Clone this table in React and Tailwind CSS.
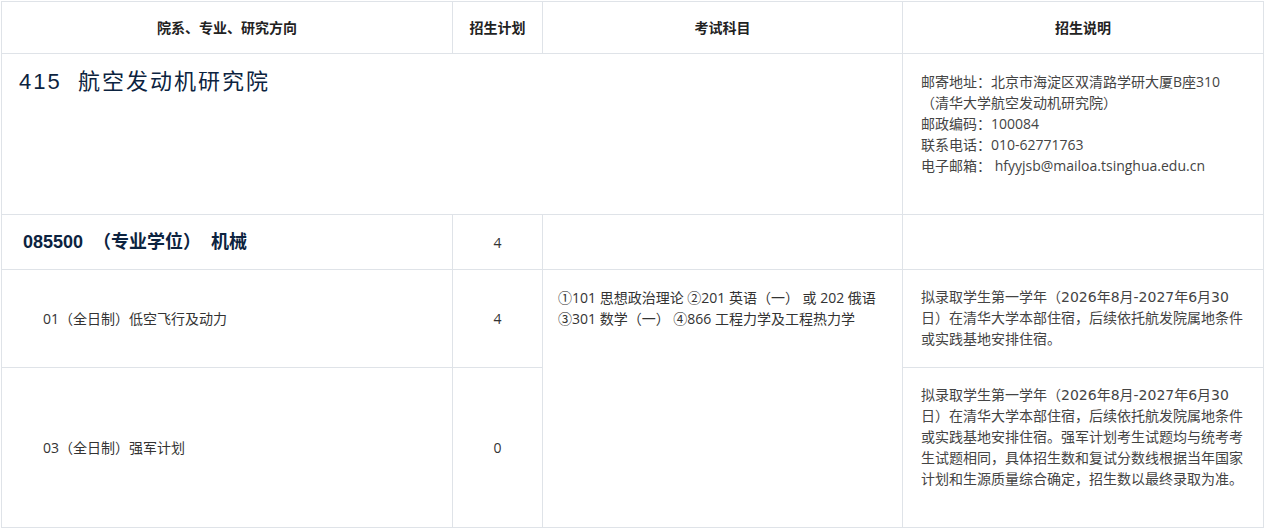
const font = "font-['Open_Sans','Noto_Sans_CJK_SC',sans-serif]";

const cell = 'border border-[#dfe3e8] align-middle';
const head = `${cell} text-center font-bold text-[14px] text-[#222]`;
const note = `${cell} align-top pl-[18px] pr-[18px] pt-[17px] text-[14px] leading-[21px] text-[#444] font-['DejaVu_Sans','Noto_Sans_CJK_SC',sans-serif]`;

const App = () => {
  return (
    <div className={`bg-white pl-px pt-px ${font} text-[14px] text-[#333]`}>
      <table className="border-collapse table-fixed w-[1262px]">
        <colgroup>
          <col className="w-[451px]" />
          <col className="w-[90px]" />
          <col className="w-[360px]" />
          <col className="w-[361px]" />
        </colgroup>
        <thead>
          <tr className="h-[52px]">
            <th className={head}>院系、专业、研究方向</th>
            <th className={head}>招生计划</th>
            <th className={head}>考试科目</th>
            <th className={head}>招生说明</th>
          </tr>
        </thead>
        <tbody>
          <tr className="h-[161px]">
            <td colSpan={3} className={`${cell} align-top pl-[17px] pt-[11px]`}>
              <span className="text-[22px] text-[#0c2340] tracking-[2px] font-['Liberation_Sans','Noto_Sans_CJK_SC',sans-serif]">
                415&nbsp; 航空发动机研究院
              </span>
            </td>
            <td className={`${cell} align-top pl-[18px] pt-[17px] leading-[21px] text-[#444]`}>
              <div>邮寄地址：北京市海淀区双清路学研大厦B座310</div>
              <div>（清华大学航空发动机研究院）</div>
              <div>邮政编码：100084</div>
              <div>联系电话：010-62771763</div>
              <div>电子邮箱： hfyyjsb@mailoa.tsinghua.edu.cn</div>
            </td>
          </tr>
          <tr className="h-[55px]">
            <td className={`${cell} pl-[21px]`}>
              <span className="text-[18px] font-bold text-[#0c2340] font-['Liberation_Sans','Noto_Sans_CJK_SC',sans-serif]">
                085500&nbsp; （专业学位）&nbsp; 机械
              </span>
            </td>
            <td className={`${cell} text-center`}>4</td>
            <td className={cell}></td>
            <td className={cell}></td>
          </tr>
          <tr className="h-[98px]">
            <td className={`${cell} pl-[41px]`}>01（全日制）低空飞行及动力</td>
            <td className={`${cell} text-center`}>4</td>
            <td rowSpan={2} className={`${cell} align-top pl-[15px] pt-[17px] leading-[21px]`}>
              <div>①101 思想政治理论 ②201 英语（一） 或 202 俄语</div>
              <div>③301 数学（一） ④866 工程力学及工程热力学</div>
            </td>
            <td className={note}>
              拟录取学生第一学年（2026年8月-2027年6月30日）在清华大学本部住宿，后续依托航发院属地条件或实践基地安排住宿。
            </td>
          </tr>
          <tr className="h-[160px]">
            <td className={`${cell} pl-[41px]`}>03（全日制）强军计划</td>
            <td className={`${cell} text-center`}>0</td>
            <td className={note}>
              拟录取学生第一学年（2026年8月-2027年6月30日）在清华大学本部住宿，后续依托航发院属地条件或实践基地安排住宿。强军计划考生试题均与统考考生试题相同，具体招生数和复试分数线根据当年国家计划和生源质量综合确定，招生数以最终录取为准。
            </td>
          </tr>
        </tbody>
      </table>
    </div>
  );
};

export default App;
